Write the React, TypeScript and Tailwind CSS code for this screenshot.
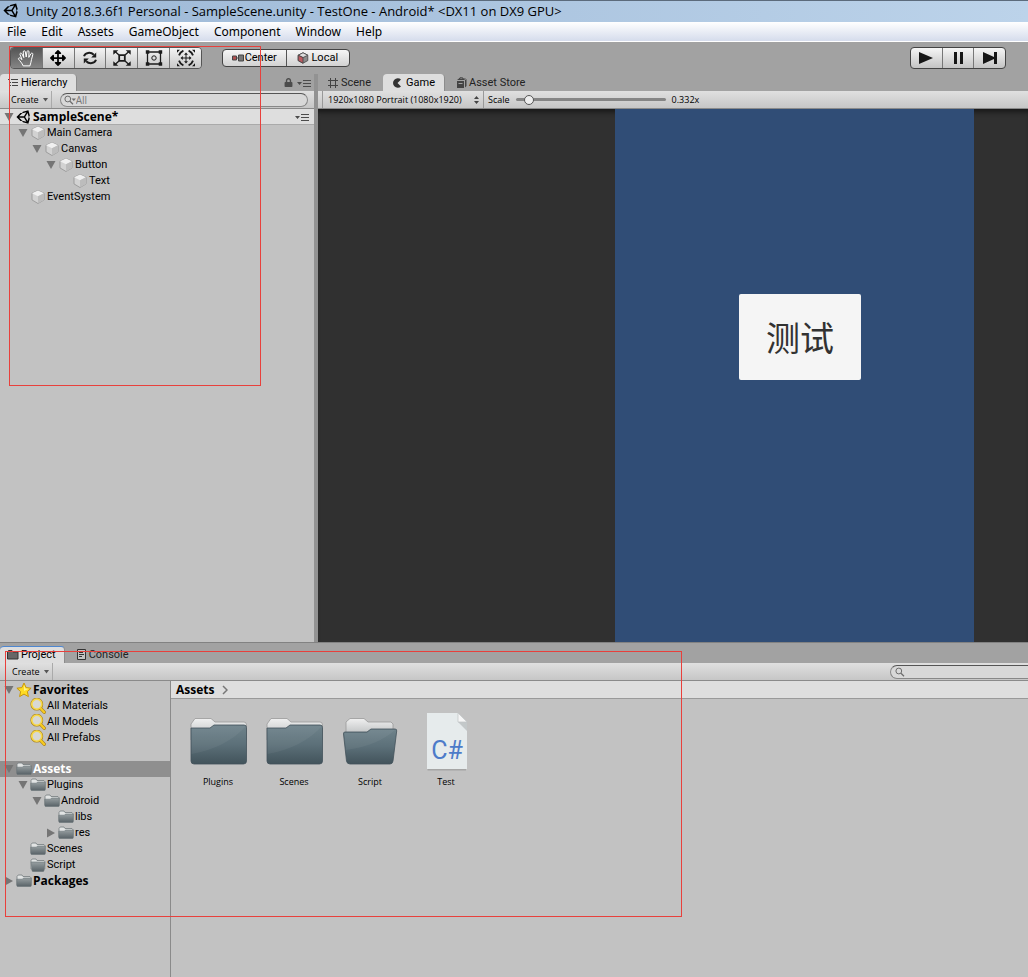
import { useState } from 'react'
import type { ReactNode } from 'react'
import { FaArrowsAlt, FaLock, FaUnity } from 'react-icons/fa'

type TreeNode = {
  label: string
  depth: number
  arrow?: 'open' | 'closed'
  bold?: boolean
  icon: ReactNode
}

const indents = ['pl-1', 'pl-[18px]', 'pl-8', 'pl-[46px]', 'pl-[60px]']

function CubeIcon() {
  return (
    <svg viewBox="0 0 16 16" className="h-4 w-4">
      <path d="M8 1.5 14 4.3v6.6L8 14.5 2 10.9V4.3Z" fill="#d2d2d2" stroke="#909090" strokeWidth="0.8" />
      <path d="M8 1.5 14 4.3 8 7.2 2 4.3Z" fill="#f0f0f0" />
      <path d="M8 7.2 14 4.3v6.6L8 14.5Z" fill="#bcbcbc" />
    </svg>
  )
}

function SmallFolder({ open = false }: { open?: boolean }) {
  return (
    <svg viewBox="0 0 16 16" className="h-4 w-4">
      <defs>
        <linearGradient id="smallFolder" x1="0" y1="0" x2="0" y2="1">
          <stop offset="0" stopColor="#98a0a2" />
          <stop offset="1" stopColor="#586267" />
        </linearGradient>
      </defs>
      <path d="M1 12V3.5L2.2 2H6l1 1.5h7l.8 1V12Z" fill="#e2e4e4" stroke="#747b7e" strokeWidth="0.8" />
      <path
        d={open ? 'M1.2 5h13.6L14 13.5q0 1-1 1H3q-1 0-1-1Z' : 'M.8 6.2h5.7l1-1.2h7.8v7.6q0 .9-1 .9H1.8q-1 0-1-.9Z'}
        fill="url(#smallFolder)"
        stroke="#6a7377"
        strokeWidth="0.6"
      />
    </svg>
  )
}

function StarIcon() {
  return (
    <svg viewBox="0 0 16 16" className="h-4 w-4">
      <path
        d="m8 1 2.1 4.6 5 .6-3.7 3.4 1 5L8 12.1l-4.4 2.5 1-5L.9 6.2l5-.6Z"
        fill="#ffdc22"
        stroke="#c8960a"
        strokeLinejoin="round"
      />
      <path d="m8 3 1.4 3.4 3.4.4L8 9Z" fill="#fff38a" />
    </svg>
  )
}

function FavoriteSearch() {
  return (
    <svg viewBox="0 0 16 16" className="h-4 w-4" fill="none" strokeLinecap="round">
      <circle cx="6.8" cy="6.2" r="5" stroke="#a9811a" strokeWidth="2.8" />
      <path d="m10.8 10.6 3.4 3.6" stroke="#a9811a" strokeWidth="3.4" />
      <circle cx="6.8" cy="6.2" r="5" fill="#d8d8d4" stroke="#f7d84a" strokeWidth="1.7" />
      <path d="m10.8 10.6 3.4 3.6" stroke="#f7cb20" strokeWidth="2.2" />
    </svg>
  )
}

function HandIcon() {
  return (
    <svg viewBox="0 0 18 18" className="h-[18px] w-[18px]" fill="none" stroke="#fff" strokeLinejoin="round" strokeLinecap="round">
      <path d="M6 16.5C5 14 3 12 1.5 10.2 1 9 2.4 8.4 3.4 9.2L5 10.6 3 5.4C2.7 4 4.3 3.5 4.9 4.8L6.8 8.6 6.2 3C6.2 1.5 8 1.3 8.3 2.7L9.2 8 10 2.6C10.3 1.2 12.1 1.5 12 3L11.8 8.4 14 4.6C14.8 3.5 16.3 4.3 15.8 5.7L14.5 10.5C14.2 13 13.5 14.5 13 16.5Z" />
    </svg>
  )
}

function RotateIcon() {
  return (
    <svg viewBox="0 0 16 16" className="h-4 w-4" fill="none" stroke="#1c1c1c" strokeWidth="2">
      <path d="M2 6.2C3.2 2.6 8.6 1.6 11.8 4.8" />
      <path d="M14 9.8C12.8 13.4 7.4 14.4 4.2 11.2" />
      <path d="M14.2 2.4v5H9.2ZM1.8 13.6v-5h5Z" fill="#1c1c1c" stroke="none" />
    </svg>
  )
}

function ScaleIcon() {
  return (
    <svg viewBox="0 0 18 16" className="h-4 w-[18px]" fill="none" stroke="#1c1c1c">
      <path d="M6.2 5.2h5.6v5.6H6.2Z" strokeWidth="1.8" />
      <path d="m6 5-4-3.6M12 5l4-3.6M6 11l-4 3.6M12 11l4 3.6" strokeWidth="1.4" />
      <path
        d="M.3.3h5L.3 4.8ZM17.7.3h-5l5 4.5ZM.3 15.7h5l-5-4.5ZM17.7 15.7h-5l5-4.5Z"
        fill="#1c1c1c"
        stroke="none"
      />
    </svg>
  )
}

function RectIcon() {
  return (
    <svg viewBox="0 0 18 16" className="h-4 w-[18px]" fill="none" stroke="#1c1c1c">
      <path d="M2.5 2h13M2.5 14h13M2.5 2v12M15.5 2v12" strokeWidth="1.3" />
      <path
        d="M.8.2h3.5v3.5H.8ZM13.7.2h3.5v3.5h-3.5ZM.8 12.3h3.5v3.5H.8ZM13.7 12.3h3.5v3.5h-3.5Z"
        fill="#1c1c1c"
        stroke="none"
      />
      <circle cx="9" cy="8" r="2.2" />
    </svg>
  )
}

function TransformIcon() {
  return (
    <svg viewBox="0 0 20 18" className="h-[18px] w-5" fill="none" stroke="#1c1c1c">
      <path d="M6 9h8M10 5v8" />
      <path
        d="m10 3.5 2 2.3H8ZM10 14.5l2-2.3H8ZM4.5 9l2.3-2v4ZM15.5 9l-2.3-2v4Z"
        fill="#1c1c1c"
        stroke="none"
      />
      <path
        d="M3 6.4Q4.2 3 7.4 1.6M17 6.4Q15.8 3 12.6 1.6M3 11.6Q4.2 15 7.4 16.4M17 11.6Q15.8 15 12.6 16.4"
        strokeWidth="1.8"
      />
      <path d="M1 .8h3L1 3.8ZM19 .8h-3L19 3.8ZM1 17.2h3L1 14.2ZM19 17.2h-3L19 14.2Z" fill="#1c1c1c" stroke="none" />
    </svg>
  )
}

function MenuIcon() {
  return (
    <svg viewBox="0 0 14 8" className="h-2 w-[14px]" fill="#4b4b4b">
      <path d="M0 3h5L2.5 6ZM6 1h8v1H6ZM6 4h8v1H6ZM6 7h8v1H6Z" />
    </svg>
  )
}

function Caret() {
  return (
    <svg viewBox="0 0 5 4" className="h-1 w-[5px]" fill="#555">
      <path d="M0 0h5L2.5 3.5Z" />
    </svg>
  )
}

function SearchIcon({ caret = false }: { caret?: boolean }) {
  return (
    <svg viewBox="0 0 12 10" className="h-[10px] w-3 shrink-0" fill="none" stroke="#6d6d6d">
      <circle cx="3.8" cy="4" r="2.9" />
      <path d="m6 6.2 3 3" strokeWidth="1.3" />
      {caret && <path d="M7.5 3.5H12L9.8 6Z" fill="#6d6d6d" stroke="none" />}
    </svg>
  )
}

function BigFolder({ open = false }: { open?: boolean }) {
  return (
    <svg viewBox="0 0 64 64" className="h-16 w-16">
      <defs>
        <linearGradient id="folderBack" x1="0" y1="0" x2="0" y2="1">
          <stop offset="0" stopColor="#f0f0f0" />
          <stop offset="1" stopColor="#b9bcbd" />
        </linearGradient>
        <linearGradient id="folderFront" x1="0" y1="0" x2="0" y2="1">
          <stop offset="0" stopColor="#6f838b" />
          <stop offset="0.5" stopColor="#5c7079" />
          <stop offset="1" stopColor="#42535b" />
        </linearGradient>
      </defs>
      {open ? (
        <>
          <path d="M8 26V12l4-3.5h14l4 3.5h23l2 2v12Z" fill="url(#folderBack)" stroke="#999" strokeWidth="0.8" />
          <path d="M7 22h22l4-3h24q2 0 1.7 2L55 51q-.4 3-3 3H12q-3 0-3.5-3L5.500 24Q5.3 22 7 22Z" fill="url(#folderFront)" stroke="#43525a" strokeWidth="0.8" />
          <path d="M57 20Q39 36 8 40L6.5 23H29l4-3Z" fill="#fff" opacity="0.05" />
        </>
      ) : (
        <>
          <path d="M5 30V14l4-5.5h16l4 3.5h29q2.5 0 2.5 3v15Z" fill="url(#folderBack)" stroke="#999" strokeWidth="0.8" />
          <path d="M5 18h19l4-3h30q2.5 0 2.5 2.5V51q0 3-3 3H8q-3 0-3-3Z" fill="url(#folderFront)" stroke="#43525a" strokeWidth="0.8" />
          <path d="M60 16Q40 38 5.5 44V18.5H24l4-3Z" fill="#fff" opacity="0.05" />
        </>
      )}
    </svg>
  )
}

function ScriptFile() {
  return (
    <svg viewBox="0 0 64 64" className="h-16 w-16">
      <path d="M13.5 3.5h30l8.5 9V60.5h-38.5Z" fill="#000" opacity="0.15" />
      <path d="M13 3h31l9 9v47H13Z" fill="#e6ebec" />
      <path d="M44 12h9v9Z" fill="#c3c8c9" />
      <path d="M44 3v9h9Z" fill="#f6f6f6" stroke="#bfc3c4" strokeWidth="0.7" />
      <text x="33" y="49" textAnchor="middle" fontSize="25" fontFamily="Roboto, sans-serif" fill="#4d7bc9">
        C#
      </text>
    </svg>
  )
}

const menus = ['File', 'Edit', 'Assets', 'GameObject', 'Component', 'Window', 'Help']

const tools = [
  { name: 'Hand', icon: <HandIcon /> },
  { name: 'Move', icon: <FaArrowsAlt className="h-4 w-4" /> },
  { name: 'Rotate', icon: <RotateIcon /> },
  { name: 'Scale', icon: <ScaleIcon /> },
  { name: 'Rect', icon: <RectIcon /> },
  { name: 'Transform', icon: <TransformIcon /> },
]

const playback = [
  { name: 'Play', path: 'M1 1v12l14-6Z' },
  { name: 'Pause', path: 'M4 1h3v12H4ZM10 1h3v12h-3Z' },
  { name: 'Step', path: 'M1 1v12l11-5v5h3V1h-3v5Z' },
]

const hierarchy: TreeNode[] = [
  { label: 'Main Camera', depth: 1, arrow: 'open', icon: <CubeIcon /> },
  { label: 'Canvas', depth: 2, arrow: 'open', icon: <CubeIcon /> },
  { label: 'Button', depth: 3, arrow: 'open', icon: <CubeIcon /> },
  { label: 'Text', depth: 4, icon: <CubeIcon /> },
  { label: 'EventSystem', depth: 1, icon: <CubeIcon /> },
]

const favorites: TreeNode[] = [
  { label: 'Favorites', depth: 0, arrow: 'open', bold: true, icon: <StarIcon /> },
  { label: 'All Materials', depth: 1, icon: <FavoriteSearch /> },
  { label: 'All Models', depth: 1, icon: <FavoriteSearch /> },
  { label: 'All Prefabs', depth: 1, icon: <FavoriteSearch /> },
]

const folders: TreeNode[] = [
  { label: 'Assets', depth: 0, arrow: 'open', bold: true, icon: <SmallFolder /> },
  { label: 'Plugins', depth: 1, arrow: 'open', icon: <SmallFolder /> },
  { label: 'Android', depth: 2, arrow: 'open', icon: <SmallFolder /> },
  { label: 'libs', depth: 3, icon: <SmallFolder /> },
  { label: 'res', depth: 3, arrow: 'closed', icon: <SmallFolder /> },
  { label: 'Scenes', depth: 1, icon: <SmallFolder /> },
  { label: 'Script', depth: 1, icon: <SmallFolder open /> },
  { label: 'Packages', depth: 0, arrow: 'closed', bold: true, icon: <SmallFolder /> },
]

const assets = [
  { name: 'Plugins', icon: <BigFolder /> },
  { name: 'Scenes', icon: <BigFolder /> },
  { name: 'Script', icon: <BigFolder open /> },
  { name: 'Test', icon: <ScriptFile /> },
]

function Arrow({ state }: { state?: 'open' | 'closed' }) {
  return (
    <svg viewBox="0 0 10 10" className="h-[10px] w-[10px] shrink-0" fill="#757575">
      {state === 'open' && <path d="M.5 1h9L5 9Z" />}
      {state === 'closed' && <path d="M1 .5v9L9 5Z" />}
    </svg>
  )
}

const heading = "font-['Open_Sans',sans-serif] text-xs font-bold"

function Tree({ nodes, selected }: { nodes: TreeNode[]; selected?: string }) {
  return (
    <ul>
      {nodes.map((node) => (
        <li
          key={node.label}
          className={`flex h-4 items-center ${indents[node.depth]} ${node.bold ? heading : ''} ${
            node.label === selected ? 'bg-[#8f8f8f] text-white' : ''
          }`}
        >
          <Arrow state={node.arrow} />
          <span className="mr-px ml-[2px] shrink-0">{node.icon}</span>
          <span>{node.label}</span>
        </li>
      ))}
    </ul>
  )
}

const toolbar =
  "flex h-[18px] items-center border-b border-[#8a8a8a] bg-linear-to-b from-[#e0e0e0] to-[#c6c6c6] font-['Open_Sans',sans-serif] text-[9px]"
const activeTab = 'flex items-center rounded-t-sm border-r border-[#8c8c8c] bg-[#dedede]'

export default function App() {
  const [tool, setTool] = useState('Hand')
  const [scale, setScale] = useState(6)

  return (
    <div className="relative flex min-h-screen flex-col overflow-hidden bg-[#a2a2a2] font-['Roboto','Noto_Sans_CJK_SC',sans-serif] text-[11px] leading-4 text-black">
      <header className="font-['Noto_Sans',sans-serif]">
        <div className="flex h-[22px] items-center gap-[6px] border-t border-[#5c6b7c] bg-linear-to-r from-[#9db8d6] to-[#bcd3ea] pb-[2px] pl-[3px] font-['Open_Sans',sans-serif] text-[13px]">
          <FaUnity className="h-[17px] w-[17px]" />
          <h1>Unity 2018.3.6f1 Personal - SampleScene.unity - TestOne - Android* &lt;DX11 on DX9 GPU&gt;</h1>
        </div>
        <nav className="flex h-5 items-center gap-[15px] border-b border-white bg-linear-to-b from-white to-[#d5dcec] pl-[7px] text-xs">
          {menus.map((menu) => (
            <button key={menu}>{menu}</button>
          ))}
        </nav>
      </header>

      <div className="flex h-8 items-start pt-[5px] pr-[22px] pl-[10px]">
        <div className="flex h-[22px] w-48 divide-x divide-[#777] overflow-hidden rounded-sm border border-[#555]">
          {tools.map(({ name, icon }) => (
            <button
              key={name}
              aria-label={name}
              onClick={() => setTool(name)}
              className={`flex flex-1 items-center justify-center ${
                tool === name ? 'bg-linear-to-b from-[#555] to-[#858585]' : 'bg-linear-to-b from-[#f4f4f4] to-[#c8c8c8]'
              }`}
            >
              {icon}
            </button>
          ))}
        </div>
        <div className="mt-[2px] ml-5 flex h-[18px] w-32 divide-x divide-[#555] overflow-hidden rounded-sm border border-[#444] bg-linear-to-b from-[#f6f6f6] to-[#d2d2d2]">
          <button className="flex flex-1 items-center justify-center gap-px">
            <svg viewBox="0 0 12 8" className="h-2 w-3" fill="none" stroke="#444">
              <path d="M.5 2h4v4h-4Z" fill="#b05050" />
              <path d="M4.5 4h2" />
              <path d="M6.5 1h5v6h-5Z" fill="#777" />
            </svg>
            Center
          </button>
          <button className="flex flex-1 items-center justify-center gap-[2px]">
            <svg viewBox="0 0 12 12" className="h-3 w-3" stroke="#444" strokeWidth="0.8">
              <path d="m6 .8 4.8 2.4v5.4L6 11.2 1.2 8.6V3.2Z" fill="#8b8b8b" />
              <path d="m6 .8 4.8 2.4L6 5.6 1.2 3.2Z" fill="#ddd" />
              <path d="M1.2 3.2 6 5.6v5.6L1.2 8.6Z" fill="#bd5b61" />
            </svg>
            Local
          </button>
        </div>
        <div className="ml-auto flex h-[22px] w-24 divide-x divide-[#777] overflow-hidden rounded-sm border border-[#444] bg-linear-to-b from-[#f6f6f6] to-[#c4c4c4]">
          {playback.map(({ name, path }) => (
            <button key={name} aria-label={name} className="flex flex-1 items-center justify-center">
              <svg viewBox="0 0 16 14" className="h-[14px] w-4" fill="#161616">
                <path d={path} />
              </svg>
            </button>
          ))}
        </div>
      </div>

      <main className="flex flex-[569] basis-0">
        <section className="flex w-[318px] shrink-0 flex-col border-r-4 border-[#929292] bg-[#c2c2c2]">
          <div className="flex h-[17px] items-center justify-between bg-[#a2a2a2]">
            <h2 className={`${activeTab} h-[17px] gap-[3px] px-2`}>
              <svg viewBox="0 0 10 10" className="h-[10px] w-[10px]" fill="#444">
                <path d="M0 1h2v1H0ZM3 1h7v1H3ZM2 4h1v1H2ZM4 4h6v1H4ZM2 7h1v1H2ZM4 7h6v1H4Z" />
              </svg>
              Hierarchy
            </h2>
            <div className="flex items-center gap-1 pr-[3px]">
              <FaLock className="h-[9px] w-[9px] text-[#4b4b4b]" />
              <MenuIcon />
            </div>
          </div>
          <div className={toolbar}>
            <button className="ml-[5px] flex h-[17px] items-center gap-1 border-r border-[#aaa] pr-[3px] pl-[6px]">
              Create <Caret />
            </button>
            <label className="mr-[6px] ml-2 flex h-[14px] flex-1 items-center rounded-full border border-[#888] border-t-[#555] bg-[#d8d8d8] pl-[3px]">
              <SearchIcon caret />
              <input aria-label="Search hierarchy" placeholder="All" className="min-w-0 flex-1 bg-transparent text-[10px] leading-3 outline-none placeholder:text-[#777]" />
            </label>
          </div>
          <div className={`${heading} flex h-4 items-center border-b border-[#aaa] bg-[#dedede] pr-[5px] pl-1`}>
            <Arrow state="open" />
            <FaUnity className="mr-px ml-[2px] h-4 w-4" />
            <span className="flex-1">SampleScene*</span>
            <MenuIcon />
          </div>
          <Tree nodes={hierarchy} />
        </section>

        <section className="flex min-w-0 flex-1 flex-col">
          <div className="flex h-[17px] items-center">
            <button className="flex h-[17px] items-center gap-[2px] pr-3 pl-[9px] text-[#222]">
              <svg viewBox="0 0 12 12" className="h-3 w-3" stroke="#444">
                <path d="M3.5 1v10M8.5 1v10M1 3.5h10M1 8.5h10" fill="none" />
              </svg>
              Scene
            </button>
            <h2 className={`${activeTab} h-[17px] gap-1 px-[9px]`}>
              <svg viewBox="0 0 10 10" className="h-[10px] w-[10px]" fill="#333">
                <path d="M9 1.4A4.8 4.8 0 1 0 9 8.6L5.5 5Z" />
              </svg>
              Game
            </h2>
            <button className="flex h-[17px] items-center gap-[2px] pl-[11px] text-[#222]">
              <svg viewBox="0 0 11 11" className="h-[11px] w-[11px]" fill="#444">
                <path d="M1 4h7v7H1ZM9 3l1.5-1v7L9 10.5ZM1 3l2-1.5h7L8 3Z" />
                <path d="M3.5 3V1.2Q5.500-.5 7 1.2V3" fill="none" stroke="#444" />
                <path d="M2.5 6h4v1h-4Z" fill="#a2a2a2" />
              </svg>
              Asset Store
            </button>
          </div>
          <div className={toolbar}>
            <div className="ml-1 flex h-[17px] items-center border-x border-[#999] pr-1 pl-[5px]">
              <select aria-label="Resolution" className="w-[146px] appearance-none bg-transparent outline-none">
                <option>1920x1080 Portrait (1080x1920)</option>
              </select>
              <svg viewBox="0 0 5 8" className="h-2 w-[5px]" fill="#444">
                <path d="M0 3h5L2.5 0ZM0 5h5L2.5 8Z" />
              </svg>
            </div>
            <label htmlFor="scale" className="pr-[6px] pl-1">Scale</label>
            <input
              id="scale"
              type="range"
              value={scale}
              onChange={(e) => setScale(Number(e.target.value))}
              className="h-[3px] w-[150px] appearance-none rounded-full bg-[#858585] [&::-webkit-slider-thumb]:h-[10px] [&::-webkit-slider-thumb]:w-[10px] [&::-webkit-slider-thumb]:appearance-none [&::-webkit-slider-thumb]:rounded-full [&::-webkit-slider-thumb]:border [&::-webkit-slider-thumb]:border-[#555] [&::-webkit-slider-thumb]:bg-[#eee]"
            />
            <output htmlFor="scale" className="pl-[6px]">0.332x</output>
          </div>
          <div className="flex flex-1 bg-[#303030] shadow-[inset_0_6px_5px_-3px_#181818]">
            <div className="flex-[297]" />
            <div className="flex flex-[359] items-start justify-center bg-[#304d76] pt-[185px]">
              <button className="ml-[11px] h-[86px] w-[122px] rounded-xs bg-[#f5f5f5] font-['Noto_Sans_CJK_SC',sans-serif] text-[34px] text-[#323232]">
                测试
              </button>
            </div>
            <div className="flex-[54]" />
          </div>
        </section>
      </main>

      <section className="flex flex-[334] basis-0 flex-col border-t border-[#828282]">
        <div className="flex h-5 items-end">
          <h2 className={`${activeTab} h-[17px] gap-[2px] border-t border-t-[#4e87d0] pr-2 pl-[7px]`}>
            <svg viewBox="0 0 12 10" className="h-[10px] w-3">
              <path d="M.5 9V2l1-1.5h3.5L6 2h5v7Z" fill="#666" stroke="#333" />
            </svg>
            Project
          </h2>
          <button className="flex h-[17px] items-center gap-[3px] pl-3 text-[#222]">
            <svg viewBox="0 0 9 11" className="h-[11px] w-[9px]" fill="none" stroke="#333">
              <path d="M.5.5h8v10h-8Z" fill="#c4c4c4" />
              <path d="M2 3.5h4M2 5.5h5M2 7.5h3" />
            </svg>
            Console
          </button>
        </div>
        <div className={toolbar}>
          <button className="ml-[6px] flex h-[17px] items-center gap-1 border-r border-[#aaa] pr-[3px] pl-[6px]">
            Create <Caret />
          </button>
          <label className="ml-auto flex h-[14px] w-[138px] items-center rounded-l-full border border-r-0 border-[#888] border-t-[#555] bg-[#d8d8d8] pl-1">
            <SearchIcon />
            <input aria-label="Search project" className="min-w-0 flex-1 bg-transparent leading-3 outline-none" />
          </label>
        </div>
        <div className="flex flex-1 bg-[#c2c2c2]">
          <aside className="flex w-[171px] shrink-0 flex-col gap-[15px] border-r border-[#8a8a8a] pt-px">
            <Tree nodes={favorites} />
            <Tree nodes={folders} selected="Assets" />
          </aside>
          <div className="min-w-0 flex-1">
            <div className={`${heading} flex h-[18px] items-center gap-2 border-b border-[#999] bg-[#dedede] pl-[5px]`}>
              Assets
              <svg viewBox="0 0 6 10" className="h-[10px] w-[6px]" fill="none" stroke="#777" strokeWidth="1.5">
                <path d="m1 1 4 4-4 4" />
              </svg>
            </div>
            <ul className="flex flex-wrap gap-3 pt-[11px] pl-[15px] font-['Open_Sans',sans-serif]">
              {assets.map(({ name, icon }) => (
                <li key={name} className="w-16 text-center text-[9px]">
                  {icon}
                  {name}
                </li>
              ))}
            </ul>
          </div>
        </div>
      </section>

      {/* Highlight frames over the hierarchy and project panels */}
      <div className="pointer-events-none absolute top-[46px] left-[9px] h-[340px] w-[252px] border border-[#e8403c]" />
      <div className="pointer-events-none absolute top-[651px] left-[5px] h-[266px] w-[677px] border border-[#e8403c]" />
    </div>
  )
}
